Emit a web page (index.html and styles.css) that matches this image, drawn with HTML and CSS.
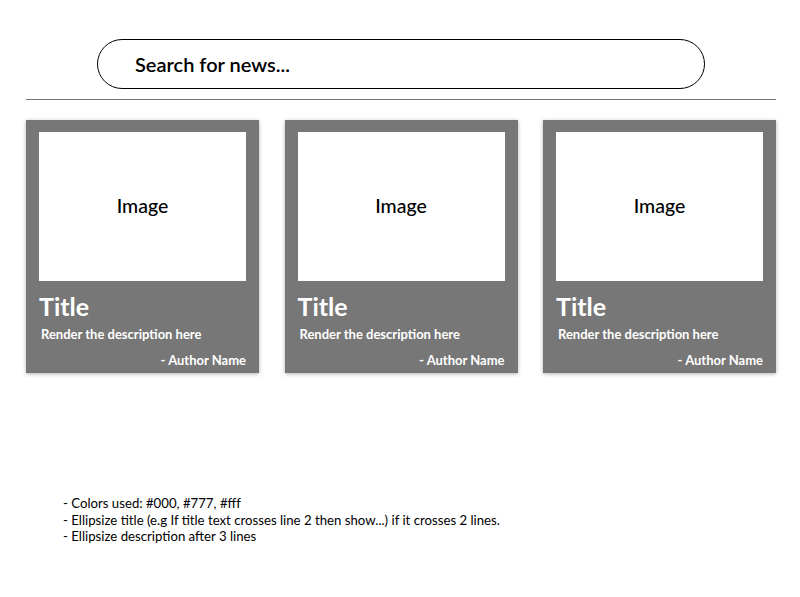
FILE: index.html
```html
<!DOCTYPE html>
<html>
<head>
<meta charset="utf-8">
<link rel="stylesheet" href="styles.css">
</head>
<body>
<div class="page">
  <div class="search-wrap">
    <div class="search">Search for news...</div>
  </div>
  <hr class="divider">
  <div class="cards">
    <div class="card">
      <div class="image">Image</div>
      <div class="title">Title</div>
      <div class="desc">Render the description here</div>
      <div class="author">- Author Name</div>
    </div>
    <div class="card">
      <div class="image">Image</div>
      <div class="title">Title</div>
      <div class="desc">Render the description here</div>
      <div class="author">- Author Name</div>
    </div>
    <div class="card">
      <div class="image">Image</div>
      <div class="title">Title</div>
      <div class="desc">Render the description here</div>
      <div class="author">- Author Name</div>
    </div>
  </div>
  <ul class="notes">
    <li>- Colors used: #000, #777, #fff</li>
    <li>- Ellipsize title (e.g If title text crosses line 2 then show...) if it crosses 2 lines.</li>
    <li>- Ellipsize description after 3 lines</li>
  </ul>
</div>
</body>
</html>
```
FILE: styles.css
```css
* { box-sizing: border-box; }
html, body { margin: 0; padding: 0; background: #fff; }
body { font-family: Lato, "Open Sans", sans-serif; color: #000; }
.page { width: 750px; margin-left: 26px; padding-top: 39px; }
.search-wrap { display: flex; justify-content: center; }
.search {
  width: 608px; height: 50px;
  border: 1.5px solid #000; border-radius: 25px;
  padding-left: 37px;
  display: flex; align-items: center;
  font-size: 20px; font-weight: 600;
}
.divider { margin: 10px 0 0; border: 0; border-top: 1px solid #777; height: 0; }
.cards { display: flex; justify-content: space-between; margin-top: 20px; }
.card {
  width: 233px; height: 253px;
  background: #777;
  padding: 12px 13px 0;
  box-shadow: 0 1px 4px rgba(0,0,0,0.3);
  display: flex; flex-direction: column;
  color: #fff;
}
.image {
  height: 149px; background: #fff; color: #000;
  display: flex; align-items: center; justify-content: center;
  font-size: 19.5px; font-weight: 500;
  padding-bottom: 2px;
}
.title { font-size: 25px; font-weight: 700; margin-top: 10px; line-height: 30px; }
.desc { font-size: 13px; font-weight: 700; margin-top: 5px; padding-left: 2px; line-height: 16px; }
.author { font-size: 13px; font-weight: 700; text-align: right; margin-top: 10px; line-height: 16px; }
.notes { list-style: none; margin: 122px 0 0 37px; padding: 0; font-size: 13.2px; line-height: 16.5px; }
```
